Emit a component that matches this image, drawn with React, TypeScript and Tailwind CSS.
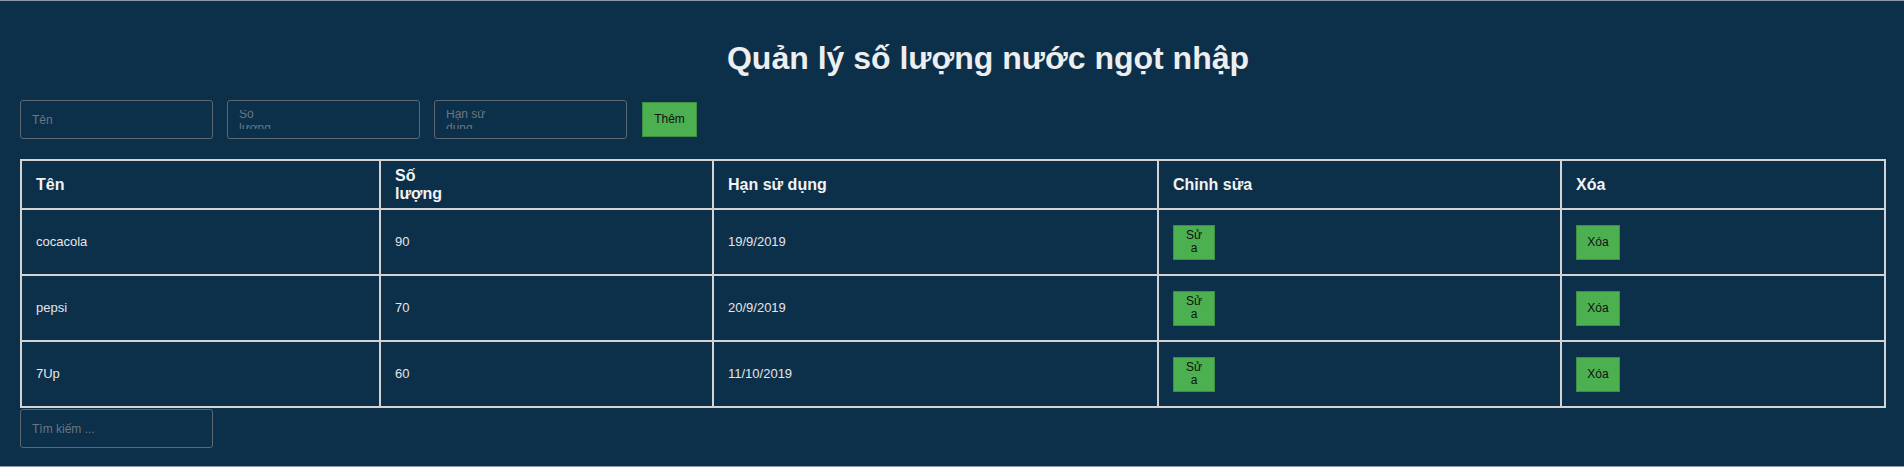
import React, { useState } from 'react';

interface Drink {
  id: number;
  name: string;
  quantity: number;
  expiry: string;
}

const initialDrinks: Drink[] = [
  { id: 1, name: 'cocacola', quantity: 90, expiry: '19/9/2019' },
  { id: 2, name: 'pepsi', quantity: 70, expiry: '20/9/2019' },
  { id: 3, name: '7Up', quantity: 60, expiry: '11/10/2019' },
];

const boxClass =
  'w-[193px] h-[39px] shrink-0 rounded-[3px] border border-[#5b6873] bg-transparent';

const greenButton =
  'flex items-center justify-center h-[35px] bg-[#4caf50] border border-[#3f8f43] text-[12px] leading-[13px] text-[#111] text-center';

const cellClass = 'border-2 border-[#d3d3d3] pl-[14px] pr-[15px] py-0';
const headClass = `${cellClass} text-left text-[16px] leading-[18px] font-bold text-[#f2f2f2]`;

function WrappedField({ placeholder }: { placeholder: string }) {
  // the placeholder wraps and gets cut off at top and bottom, like in the original page
  return (
    <div className={`${boxClass} pl-[11px] pt-[9px]`}>
      <div className="h-[19px] overflow-hidden">
        <textarea
          placeholder={placeholder}
          className="block -mt-[3px] w-[42px] h-[34px] p-0 resize-none overflow-hidden bg-transparent text-[12px] leading-[14px] text-[#e5e5e5] outline-none placeholder:text-[#6b7782]"
        />
      </div>
    </div>
  );
}

export default function App() {
  const [drinks] = useState<Drink[]>(initialDrinks);
  const [search, setSearch] = useState('');

  const visible = drinks.filter(d => d.name.toLowerCase().includes(search.toLowerCase()));

  return (
    <div className="h-[467px] overflow-hidden bg-[#0c2f4a] border-t border-b border-[#8c9ba7] px-[20px] font-['Liberation_Sans',Arial,sans-serif] text-[#e6e6e6]">
      <h1 className="mt-[39px] pl-[72px] text-center text-[32px] leading-[37px] font-bold text-[#eceef0]">
        Quản lý số lượng nước ngọt nhập
      </h1>

      <div className="mt-[23px] flex items-center gap-[14px]">
        <input
          placeholder="Tên"
          className={`${boxClass} px-[11px] text-[12px] text-[#e5e5e5] outline-none placeholder:text-[#6b7782]`}
        />
        <WrappedField placeholder="Số lượng" />
        <WrappedField placeholder="Hạn sử dụng" />
        <button className={`${greenButton} ml-px w-[55px]`}>Thêm</button>
      </div>

      <table className="mt-[20px] w-[1864px] table-fixed border-collapse">
        <colgroup>
          <col className="w-[359px]" />
          <col className="w-[333px]" />
          <col className="w-[445px]" />
          <col className="w-[403px]" />
          <col className="w-[324px]" />
        </colgroup>
        <thead>
          <tr className="h-[49px]">
            <th className={headClass}>Tên</th>
            <th className={headClass}>
              Số
              <br />
              lượng
            </th>
            <th className={headClass}>Hạn sử dụng</th>
            <th className={headClass}>Chỉnh sửa</th>
            <th className={headClass}>Xóa</th>
          </tr>
        </thead>
        <tbody>
          {visible.map(drink => (
            <tr key={drink.id} className="h-[66px]">
              <td className={`${cellClass} text-[13px]`}>{drink.name}</td>
              <td className={`${cellClass} text-[13px]`}>{drink.quantity}</td>
              <td className={`${cellClass} text-[13px]`}>{drink.expiry}</td>
              <td className={cellClass}>
                <button className={`${greenButton} w-[42px]`}>
                  Sử
                  <br />
                  a
                </button>
              </td>
              <td className={cellClass}>
                <button className={`${greenButton} w-[44px]`}>Xóa</button>
              </td>
            </tr>
          ))}
        </tbody>
      </table>

      <input
        value={search}
        onChange={e => setSearch(e.target.value)}
        placeholder="Tìm kiếm ..."
        className={`${boxClass} block mt-px px-[11px] text-[12px] text-[#e5e5e5] outline-none placeholder:text-[#6b7782]`}
      />
    </div>
  );
}
